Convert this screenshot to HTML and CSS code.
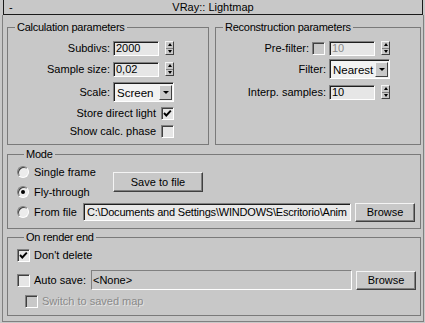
FILE: index.html
```html
<!DOCTYPE html>
<html lang="en">
<head>
    <meta charset="UTF-8">
    <title>VRay:: Lightmap</title>
    <link rel="stylesheet" href="styles.css">
</head>
<body>
    <div class="rollout">
        <div class="title">
            <span class="minus">-</span>
            <span class="title-text">VRay:: Lightmap</span>
        </div>
        <div class="rollout-body">
            <div class="top-row">
                <fieldset class="group calc">
                    <legend>Calculation parameters</legend>
                    <div class="prow">
                        <span class="lbl">Subdivs:</span>
                        <span class="field">2000</span>
                        <span class="spin"><span class="spin-up"></span><span class="spin-down"></span></span>
                    </div>
                    <div class="prow">
                        <span class="lbl">Sample size:</span>
                        <span class="field">0,02</span>
                        <span class="spin"><span class="spin-up"></span><span class="spin-down"></span></span>
                    </div>
                    <div class="prow r3">
                        <span class="lbl">Scale:</span>
                        <span class="combo"><span class="combo-text">Screen</span><span class="combo-btn"></span></span>
                    </div>
                    <div class="prow">
                        <span class="lbl lbl-check">Store direct light</span>
                        <span class="check on"></span>
                    </div>
                    <div class="prow r5">
                        <span class="lbl lbl-check">Show calc. phase</span>
                        <span class="check"></span>
                    </div>
                </fieldset>
                <fieldset class="group recon">
                    <legend>Reconstruction parameters</legend>
                    <div class="prow">
                        <span class="lbl">Pre-filter:</span>
                        <span class="check disabled pre"></span>
                        <span class="field disabled">10</span>
                        <span class="spin"><span class="spin-up"></span><span class="spin-down"></span></span>
                    </div>
                    <div class="prow">
                        <span class="lbl">Filter:</span>
                        <span class="combo"><span class="combo-text">Nearest</span><span class="combo-btn"></span></span>
                    </div>
                    <div class="prow r3">
                        <span class="lbl">Interp. samples:</span>
                        <span class="field">10</span>
                        <span class="spin"><span class="spin-up"></span><span class="spin-down"></span></span>
                    </div>
                </fieldset>
            </div>

            <fieldset class="group mode">
                <legend>Mode</legend>
                <div class="mode-top">
                    <div class="radios">
                        <div class="orow"><span class="radio"></span><span>Single frame</span></div>
                        <div class="orow"><span class="radio on"></span><span>Fly-through</span></div>
                    </div>
                    <div class="btn save-btn">Save to file</div>
                </div>
                <div class="orow">
                    <span class="radio"></span><span class="from-lbl">From file</span>
                    <span class="path">C:\Documents and Settings\WINDOWS\Escritorio\Anim</span>
                    <div class="btn browse">Browse</div>
                </div>
            </fieldset>

            <fieldset class="group render-end">
                <legend>On render end</legend>
                <div class="orow first">
                    <span class="check on"></span><span class="cb-text">Don't delete</span>
                </div>
                <div class="orow save-row">
                    <span class="check"></span><span class="cb-text auto-lbl">Auto save:</span>
                    <span class="path none">&lt;None&gt;</span>
                    <div class="btn browse">Browse</div>
                </div>
                <div class="orow switch-row">
                    <span class="check disabled"></span><span class="cb-text gray">Switch to saved map</span>
                </div>
            </fieldset>
        </div>
    </div>
</body>
</html>
```

FILE: styles.css
```css
body {
    margin: 0;
    background-color: #c8c8c8;
    color: #000;
    font-family: "Liberation Sans", Arial, sans-serif;
    font-size: 11px;
    line-height: 12px;
}

.rollout {
    width: 422px;
    margin-left: 2px;
}

.title {
    height: 14px;
    margin: 0 1px;
    border: 1px solid #1a1a1a;
    border-top: none;
    display: grid;
    grid-template-columns: 1fr auto 1fr;
    align-items: center;
    line-height: 13px;
}
.minus {
    padding-left: 5px;
}

.rollout-body {
    border: 1px solid #808080;
    border-top: none;
    padding: 6px 2px 5px 4px;
}

.top-row {
    display: flex;
    gap: 6px;
}

.group {
    margin: 0;
    padding: 0;
    border: 1px solid #7a7a7a;
    min-width: 0;
}
.group legend {
    margin-left: 7px;
    padding: 0 2px;
    line-height: 12px;
    letter-spacing: -0.25px;
}

.calc {
    width: 202px;
    box-sizing: border-box;
    padding: 5px 34px 3px 0;
}
.recon {
    flex: 1;
    padding: 5px 30px 3px 0;
}

.prow {
    height: 20px;
    display: flex;
    justify-content: flex-end;
    align-items: center;
    margin-top: 1px;
}
.prow:first-of-type {
    margin-top: 0;
}
.prow.r3 {
    margin-top: 3px;
}
.prow.r5 {
    margin-top: -2px;
}

.lbl {
    margin-right: 3px;
}
.lbl-check {
    margin-right: 5px;
}

.field {
    box-sizing: border-box;
    width: 46px;
    height: 15px;
    padding-left: 2px;
    background-color: #e6e6e6;
    border: 1px solid;
    border-color: #808080 #fff #fff #808080;
    box-shadow: inset 1px 1px #1e1e1e;
    line-height: 13px;
}
.field.disabled {
    color: #8a8a8a;
}

.spin {
    box-sizing: border-box;
    width: 9px;
    height: 14px;
    margin-left: 6px;
    display: flex;
    flex-direction: column;
    border: 1px solid;
    border-color: #f4f4f4 #404040 #404040 #f4f4f4;
}
.spin-up, .spin-down {
    flex: 1;
    display: flex;
    justify-content: center;
    align-items: center;
}
.spin-up {
    border-bottom: 1px solid #808080;
}
.spin-up::before {
    content: "";
    border-left: 2px solid transparent;
    border-right: 2px solid transparent;
    border-bottom: 3px solid #000;
}
.spin-down::before {
    content: "";
    border-left: 2px solid transparent;
    border-right: 2px solid transparent;
    border-top: 3px solid #000;
}

.combo {
    box-sizing: border-box;
    width: 61px;
    height: 20px;
    display: flex;
    align-items: center;
    background-color: #f2f2f2;
    border: 1px solid;
    border-color: #808080 #fff #fff #808080;
    box-shadow: inset 1px 1px #1e1e1e;
    padding: 2px 1px 1px 3px;
}
.combo-text {
    flex: 1;
    font-size: 11.5px;
}
.combo-btn {
    box-sizing: border-box;
    width: 13px;
    height: 15px;
    display: flex;
    justify-content: center;
    align-items: center;
    background-color: #c8c8c8;
    border: 1px solid;
    border-color: #f4f4f4 #404040 #404040 #f4f4f4;
}
.combo-btn::before {
    content: "";
    border-left: 3px solid transparent;
    border-right: 3px solid transparent;
    border-top: 3px solid #000;
}

.check {
    box-sizing: border-box;
    width: 13px;
    height: 13px;
    flex: none;
    background-color: #e6e6e6;
    border: 1px solid;
    border-color: #808080 #fff #fff #808080;
    box-shadow: inset 1px 1px #404040;
}
.check.on {
    background-image: url("data:image/svg+xml;utf8,<svg xmlns='http://www.w3.org/2000/svg' width='11' height='11'><polyline points='2,5 4.3,7.5 8.8,2.6' fill='none' stroke='black' stroke-width='1.9'/></svg>");
    background-repeat: no-repeat;
}
.check.disabled {
    background-color: #c8c8c8;
}
.check.pre {
    margin-right: 4px;
}

.group.mode {
    margin-top: 3px;
    padding: 2px 5px 6px 9px;
}
.mode-top {
    display: flex;
    align-items: center;
}
.radios {
    width: 96px;
}

.orow {
    height: 20px;
    display: flex;
    align-items: center;
}

.radio {
    box-sizing: border-box;
    width: 12px;
    height: 12px;
    margin-right: 5px;
    border-radius: 50%;
    background-color: #ececec;
    border: 1px solid;
    border-color: #808080 #fff #fff #808080;
    box-shadow: inset 1px 1px #404040;
    display: flex;
    justify-content: center;
    align-items: center;
}
.radio.on::before {
    content: "";
    width: 4px;
    height: 4px;
    border-radius: 50%;
    background-color: #000;
}

.btn {
    box-sizing: border-box;
    display: flex;
    justify-content: center;
    align-items: center;
    background-color: #c8c8c8;
    border: 1px solid;
    border-color: #f4f4f4 #404040 #404040 #f4f4f4;
    box-shadow: inset -1px -1px #808080;
}
.save-btn {
    width: 90px;
    height: 20px;
}
.browse {
    width: 60px;
    height: 19px;
    margin-left: 4px;
}

.from-lbl {
    width: 49px;
    flex: none;
}
.path {
    box-sizing: border-box;
    flex: 1;
    height: 18px;
    padding-left: 3px;
    overflow: hidden;
    white-space: nowrap;
    letter-spacing: -0.2px;
    background-color: #e8e8e8;
    border: 1px solid;
    border-color: #808080 #fff #fff #808080;
    box-shadow: inset 1px 1px #1e1e1e;
    line-height: 16px;
}
.path.none {
    height: 20px;
    background-color: #c8c8c8;
    box-shadow: none;
    line-height: 18px;
    padding-left: 1px;
    letter-spacing: 0;
}

.group.render-end {
    margin-top: 2px;
    padding: 2px 4px 4px 9px;
}
.render-end .check {
    margin-right: 4px;
}
.orow.save-row {
    margin-top: 5px;
}
.orow.switch-row {
    margin-top: 1px;
    padding-left: 8px;
}
.cb-text.auto-lbl {
    width: 57px;
    flex: none;
}
.gray {
    color: #8a8a8a;
    text-shadow: 1px 1px #e4e4e4;
}
```
